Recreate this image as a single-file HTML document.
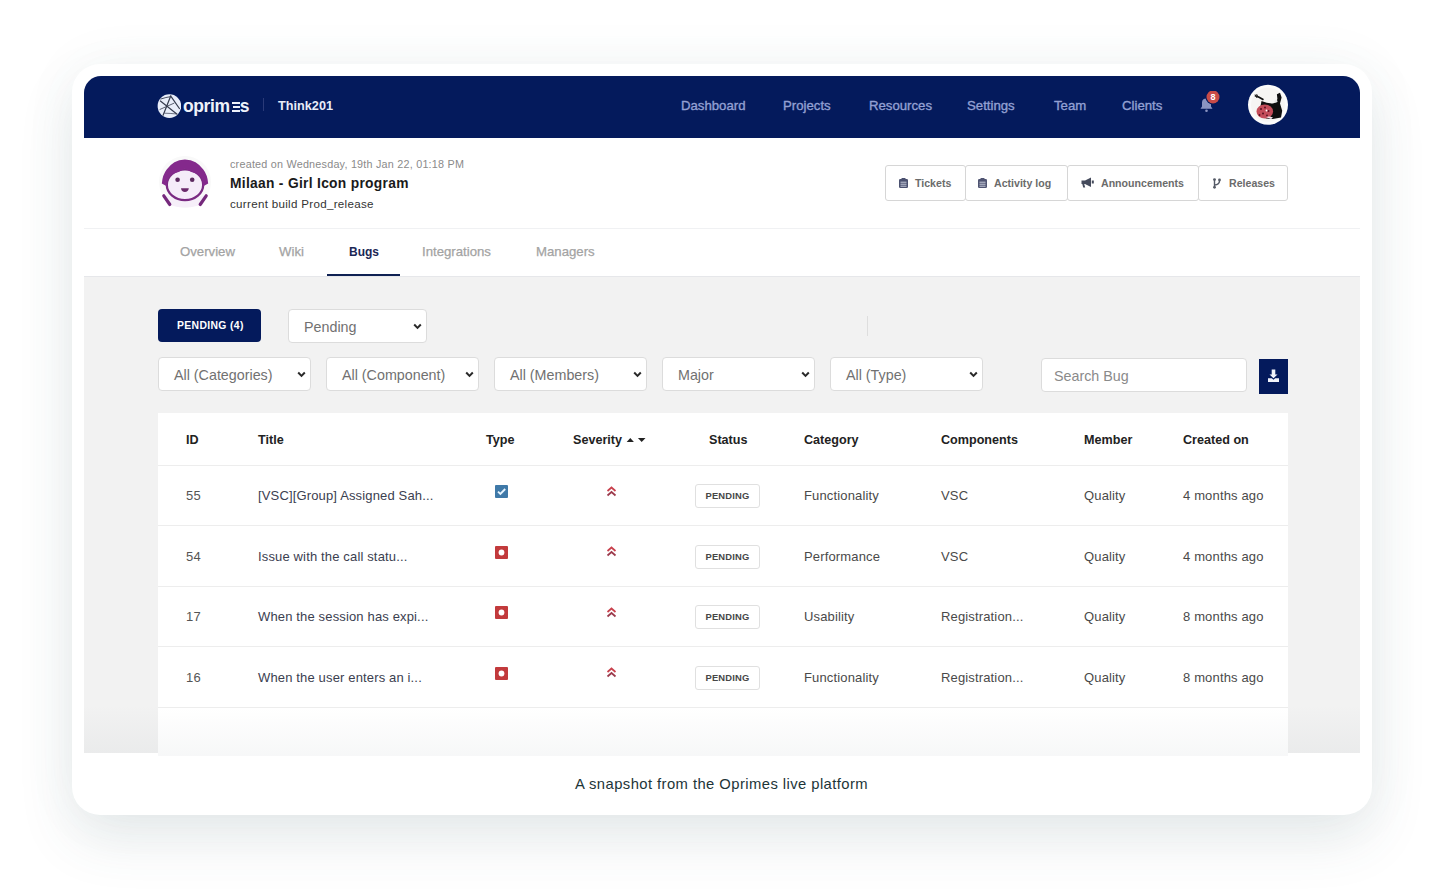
<!DOCTYPE html>
<html><head><meta charset="utf-8">
<style>
*{margin:0;padding:0;box-sizing:border-box}
html,body{width:1444px;height:895px;overflow:hidden;background:#fff;font-family:"Liberation Sans",sans-serif}
.abs{position:absolute}
#card{position:absolute;left:72px;top:64px;width:1300px;height:751px;background:#fff;border-radius:28px;
 box-shadow:0 24px 56px rgba(60,90,100,0.12),0 0 56px rgba(80,110,120,0.05)}
#nav{position:absolute;left:84px;top:76px;width:1276px;height:62px;background:#041a5c;border-radius:17px 17px 0 0}
.t{position:absolute;white-space:nowrap;line-height:1}
.navi{color:#93a0d3;font-size:13.2px;top:99px;-webkit-text-stroke:0.35px #93a0d3}
#hdr-line{position:absolute;left:84px;top:228px;width:1276px;height:1px;background:#f0f1f3}
#tab-line{position:absolute;left:84px;top:276px;width:1276px;height:1px;background:#e6e7ea}
#gray{position:absolute;left:84px;top:277px;width:1276px;height:476px;background:#f2f2f2}
.tab{color:#a3a3a3;font-size:13.2px;top:245.3px;-webkit-text-stroke:0.25px #a3a3a3}
.sel{position:absolute;height:34px;background:#fff;border:1px solid #dcdcdc;border-radius:4px}
.sel span{position:absolute;left:15px;top:10px;font-size:14.3px;color:#717171;white-space:nowrap;line-height:1}
.chev{position:absolute;right:4px;top:13px}
#table{position:absolute;left:158px;top:413px;width:1130px;height:343px;background:#fff}
.th{font-weight:bold;font-size:12.6px;color:#222;top:434px}
.td{font-size:13px;color:#4a4a4a;letter-spacing:0.15px}
.hl{position:absolute;left:158px;width:1130px;height:1px;background:#ededed}
.badge{position:absolute;left:695px;width:65px;height:24px;border:1px solid #e0e0e0;border-radius:3px;background:#fff;font-weight:bold;font-size:9.4px;color:#474747;text-align:center;line-height:22px;letter-spacing:0.2px}
.btn{position:absolute;top:165px;height:36px;border:1px solid #d6d6d6;background:#fff;border-radius:3px}
.btn span{position:absolute;top:12px;font-weight:bold;font-size:10.6px;color:#6b6b6b;white-space:nowrap;line-height:1}
</style></head>
<body>
<div id="card"></div>
<div id="nav"></div>
<!-- logo -->
<svg class="abs" style="left:157px;top:94px" width="24" height="24" viewBox="0 0 24 24">
 <circle cx="12.4" cy="12.1" r="11.8" fill="#e9eefa"/>
 <g stroke="#353b4d" stroke-width="1.2" fill="none" stroke-linecap="round">
  <path d="M13.8 1.7 L6.1 21.2"/><path d="M14.3 2.8 L22.4 14.5"/><path d="M3.4 7 L20.1 20.2"/>
  <path d="M3.8 5 Q9 3.2 13.8 2.6" stroke-width="0.9"/><path d="M3 15.4 L17 9.2" stroke-width="0.8"/><path d="M7.8 19.2 Q13 19.3 18.8 19.9" stroke-width="0.7"/>
 </g>
</svg>
<div class="t" style="left:183px;top:98px;font-size:17.5px;font-weight:bold;color:#eef2fa;letter-spacing:-0.4px">oprim<span style="display:inline-block;width:10px"></span>s</div>
<div class="abs" style="left:232px;top:101.5px;width:8px;height:2px;background:#eef2fa"></div>
<div class="abs" style="left:233px;top:105.5px;width:7px;height:2px;background:#eef2fa"></div>
<div class="abs" style="left:232px;top:109.5px;width:8px;height:2px;background:#eef2fa"></div>
<div class="abs" style="left:263px;top:98px;width:1px;height:13px;background:#2a3a78"></div>
<div class="t" style="left:278px;top:100px;font-size:12.7px;font-weight:bold;color:#e8ecf8">Think201</div>

<div class="t navi" style="left:681px">Dashboard</div>
<div class="t navi" style="left:783px">Projects</div>
<div class="t navi" style="left:869px">Resources</div>
<div class="t navi" style="left:967px">Settings</div>
<div class="t navi" style="left:1054px">Team</div>
<div class="t navi" style="left:1122px">Clients</div>
<!-- bell -->
<svg class="abs" style="left:1198px;top:91px" width="26" height="22" viewBox="0 0 26 22">
 <path d="M2.5 17.8 L14.5 17.8 L13 15.5 L13 11.5 Q13 7.5 8.5 7.5 Q4 7.5 4 11.5 L4 15.5 Z" fill="#8a94c2"/>
 <circle cx="8.5" cy="19.8" r="1.3" fill="#8a94c2"/>
 <circle cx="15" cy="6" r="7.5" fill="#041a5c"/>
 <circle cx="15" cy="6" r="6.5" fill="#c84b48"/>
 <text x="15" y="9.3" font-family="Liberation Sans" font-weight="bold" font-size="9" fill="#fff" text-anchor="middle">8</text>
</svg>
<!-- user avatar -->
<svg class="abs" style="left:1247px;top:84px" width="42" height="42" viewBox="0 0 42 42">
 <circle cx="21" cy="20.8" r="20" fill="#fbfbfb"/>
 <circle cx="21" cy="20.8" r="17" fill="#f6f5f3"/>
 <path d="M7.8 11.5 Q12 13 16.5 15.8" stroke="#111" stroke-width="1.8" fill="none"/>
 <path d="M8 10.5 L10 14 M9.5 10 L11.5 13.5" stroke="#222" stroke-width="0.9"/>
 <path d="M14.5 17 Q20 19.5 25.8 19.6 L28.9 18.6 L30.4 15 L29.9 10.3 L33 8.8 L34.6 13.4 L33 19.6 L35.2 26.8 L34 33.5 L25.8 35 L19.1 34.5 L12 30 Z" fill="#0f0f0f"/>
 <ellipse cx="17.8" cy="27.5" rx="8.3" ry="7" fill="#c44d5a"/>
 <g fill="#5a1020"><circle cx="14" cy="25" r="1"/><circle cx="18" cy="23.5" r="1"/><circle cx="21.5" cy="27" r="1"/><circle cx="16" cy="29.5" r="1"/><circle cx="12.5" cy="31" r="0.9"/><circle cx="20" cy="31.5" r="0.9"/></g>
 <circle cx="19.5" cy="26.5" r="0.9" fill="#fff"/>
 <circle cx="29" cy="17.2" r="1.4" fill="#e8e8e8"/>
 <path d="M19 33 Q23 32 26 33.5 L24 35 Z" fill="#f4e4ea"/>
</svg>

<!-- header -->
<svg class="abs" style="left:158px;top:155px" width="54" height="54" viewBox="0 0 54 54">
 <circle cx="27" cy="27" r="26" fill="#f9f9f9"/>
 <path d="M9 49.5 Q27 55 45 49.5 L48 40 Q27 47 6 40Z" fill="#f6eff9"/>
 <path d="M5.8 40.8 L11.8 49.5 M48.2 40.8 L42.2 49.5" stroke="#75297c" stroke-width="3.2" stroke-linecap="round"/>
 <ellipse cx="27" cy="29.8" rx="18.2" ry="15.4" fill="#f5ecf9" stroke="#7a2a82" stroke-width="2.3"/>
 <path d="M3.8 28.5 Q4.5 20 8.7 14.6 Q15 5 26.9 4.4 Q39 5 45.3 14.6 Q49.5 20 50.2 28.5 L44.8 31.5 Q45.2 26 43.4 23.3 Q41.5 20 39.2 18.8 Q33 17.5 26.9 13.8 Q21 17.5 14.6 18.8 Q12.3 20 10.4 23.3 Q8.8 26 9.2 31.5 Z" fill="#84298c"/>
 <circle cx="19.6" cy="24.8" r="2.3" fill="#5d2a60"/>
 <circle cx="34.2" cy="24.8" r="2.3" fill="#5d2a60"/>
 <path d="M23 33.2 L30.8 33.2 Q30.2 37 26.9 37 Q23.6 37 23 33.2Z" fill="#6b2a6b"/>
</svg>
<div class="t" style="left:230px;top:159px;font-size:10.8px;letter-spacing:0.22px;color:#8a8a8a">created on Wednesday, 19th Jan 22, 01:18 PM</div>
<div class="t" style="left:230px;top:177px;font-size:13.8px;letter-spacing:0.3px;font-weight:bold;color:#1a1a1a">Milaan - Girl Icon program</div>
<div class="t" style="left:230px;top:197.5px;font-size:11.6px;letter-spacing:0.3px;color:#333">current build Prod_release</div>

<div class="btn" style="left:885px;width:81px"><span style="left:29px">Tickets</span></div>
<div class="btn" style="left:965px;width:103px"><span style="left:28px">Activity log</span></div>
<div class="btn" style="left:1067px;width:132px"><span style="left:33px">Announcements</span></div>
<div class="btn" style="left:1198px;width:90px"><span style="left:30px">Releases</span></div>

<svg class="abs" style="left:899px;top:178px" width="9" height="10" viewBox="0 0 9 10"><rect x="0" y="1" width="9" height="9" rx="1.3" fill="#4b5170"/><rect x="2.5" y="0" width="4" height="2" rx="0.5" fill="#4b5170"/><path d="M1.5 4.2H7.5M1.5 6.2H7.5M1.5 8.2H7.5" stroke="#e9ecf6" stroke-width="0.8"/></svg>
<svg class="abs" style="left:978px;top:178px" width="9" height="10" viewBox="0 0 9 10"><rect x="0" y="1" width="9" height="9" rx="1.3" fill="#4f5472"/><rect x="2.5" y="0" width="4" height="2" rx="0.5" fill="#4f5472"/><path d="M1.5 4.2H7.5M1.5 6.2H7.5M1.5 8.2H7.5" stroke="#e9ecf6" stroke-width="0.8"/></svg>
<svg class="abs" style="left:1081px;top:177px" width="13" height="11" viewBox="0 0 13 11"><path d="M0.5 3.5 H4 L10 0.5 V10 L4 7 H3.2 L4.2 10.5 H2.2 L1.3 7 H0.5Z" fill="#454b5c"/><rect x="10.8" y="3.5" width="2" height="3" fill="#454b5c"/></svg>
<svg class="abs" style="left:1212px;top:178px" width="10" height="11" viewBox="0 0 10 11"><g stroke="#555a66" stroke-width="1.4" fill="none"><path d="M2.5 1.5V9.5"/><path d="M7.5 3 Q7.5 6.5 2.5 7"/></g><circle cx="2.5" cy="1.6" r="1.4" fill="#555a66"/><circle cx="2.5" cy="9.3" r="1.4" fill="#555a66"/><circle cx="7.5" cy="2" r="1.4" fill="#555a66"/></svg>
<div id="hdr-line"></div>
<div class="t tab" style="left:180px">Overview</div>
<div class="t tab" style="left:279px">Wiki</div>
<div class="t tab" style="left:349px;top:245.8px;-webkit-text-stroke:0;font-weight:bold;color:#1b2755;font-size:12px">Bugs</div>
<div class="t tab" style="left:422px">Integrations</div>
<div class="t tab" style="left:536px">Managers</div>
<div class="abs" style="left:327px;top:274px;width:73px;height:3px;background:#0f2153"></div>
<div id="tab-line"></div>
<div id="gray"></div>

<!-- filters -->
<div class="abs" style="left:158px;top:309px;width:103px;height:33px;background:#041a5c;border-radius:4px"></div>
<div class="t" style="left:177px;top:321px;font-size:10.4px;letter-spacing:0.35px;font-weight:bold;color:#fff">PENDING (4)</div>
<div class="sel" style="left:288px;top:309px;width:139px"><span>Pending</span><svg class="chev" width="9" height="7" viewBox="0 0 9 7"><path d="M1.2 1.5 L4.5 4.9 L7.8 1.5" stroke="#2a2a2a" stroke-width="2" fill="none"/></svg></div>
<div class="abs" style="left:867px;top:316px;width:1px;height:20px;background:#dedede"></div>

<div class="sel" style="left:158px;top:357px;width:153px"><span>All (Categories)</span><svg class="chev" width="9" height="7" viewBox="0 0 9 7"><path d="M1.2 1.5 L4.5 4.9 L7.8 1.5" stroke="#2a2a2a" stroke-width="2" fill="none"/></svg></div>
<div class="sel" style="left:326px;top:357px;width:153px"><span>All (Component)</span><svg class="chev" width="9" height="7" viewBox="0 0 9 7"><path d="M1.2 1.5 L4.5 4.9 L7.8 1.5" stroke="#2a2a2a" stroke-width="2" fill="none"/></svg></div>
<div class="sel" style="left:494px;top:357px;width:153px"><span>All (Members)</span><svg class="chev" width="9" height="7" viewBox="0 0 9 7"><path d="M1.2 1.5 L4.5 4.9 L7.8 1.5" stroke="#2a2a2a" stroke-width="2" fill="none"/></svg></div>
<div class="sel" style="left:662px;top:357px;width:153px"><span>Major</span><svg class="chev" width="9" height="7" viewBox="0 0 9 7"><path d="M1.2 1.5 L4.5 4.9 L7.8 1.5" stroke="#2a2a2a" stroke-width="2" fill="none"/></svg></div>
<div class="sel" style="left:830px;top:357px;width:153px"><span>All (Type)</span><svg class="chev" width="9" height="7" viewBox="0 0 9 7"><path d="M1.2 1.5 L4.5 4.9 L7.8 1.5" stroke="#2a2a2a" stroke-width="2" fill="none"/></svg></div>
<div class="sel" style="left:1041px;top:358px;width:206px"><span style="left:12px;color:#8a8a8a">Search Bug</span></div>
<div class="abs" style="left:1259px;top:359px;width:29px;height:35px;background:#041a5c"></div>
<svg class="abs" style="left:1267px;top:369px" width="13" height="14" viewBox="0 0 13 14"><path d="M4.7 0.5H8.3V5.5H10.5L6.5 9.2L2.5 5.5H4.7Z" fill="#f2f4fb"/><path d="M1 9.2H4.8L6.5 10.8L8.2 9.2H12V13H1Z" fill="#f2f4fb"/></svg>

<!-- table -->
<div id="table"></div>
<div class="t th" style="left:186px">ID</div>
<div class="t th" style="left:258px">Title</div>
<div class="t th" style="left:486px">Type</div>
<div class="t th" style="left:573px">Severity</div>
<div class="t th" style="left:709px">Status</div>
<div class="t th" style="left:804px">Category</div>
<div class="t th" style="left:941px">Components</div>
<div class="t th" style="left:1084px">Member</div>
<div class="t th" style="left:1183px">Created on</div>
<svg class="abs" style="left:626px;top:437px" width="20" height="6" viewBox="0 0 20 6"><path d="M0.7 5L4.3 1L7.9 5Z" fill="#222"/><path d="M11.9 1H19.5L15.7 5Z" fill="#222"/></svg>
<div class="hl" style="top:465px"></div>
<div class="hl" style="top:525px"></div>
<div class="hl" style="top:586px"></div>
<div class="hl" style="top:646px"></div>
<div class="hl" style="top:707px"></div>

<div class="t td" style="left:186px;top:489.0px;color:#555">55</div>
<div class="t td" style="left:258px;top:489.0px;color:#3b4050">[VSC][Group] Assigned Sah...</div>
<svg class="abs" style="left:495px;top:485.0px" width="13" height="13" viewBox="0 0 13 13"><rect width="13" height="13" rx="1" fill="#3f79a8"/><path d="M3 6.6 L5.4 9 L10.2 4" stroke="#e6f4ff" stroke-width="1.9" fill="none"/></svg>
<svg class="abs" style="left:606px;top:485.5px" width="11" height="11" viewBox="0 0 11 11"><path d="M1.5 5 L5.5 1.5 L9.5 5" stroke="#c8404c" stroke-width="1.7" fill="none"/><path d="M1.5 9.5 L5.5 6 L9.5 9.5" stroke="#9b3a4c" stroke-width="1.7" fill="none"/></svg>
<div class="badge" style="top:484.0px">PENDING</div>
<div class="t td" style="left:804px;top:489.0px">Functionality</div>
<div class="t td" style="left:941px;top:489.0px">VSC</div>
<div class="t td" style="left:1084px;top:489.0px">Quality</div>
<div class="t td" style="left:1183px;top:489.0px">4 months ago</div>
<div class="t td" style="left:186px;top:549.5px;color:#555">54</div>
<div class="t td" style="left:258px;top:549.5px;color:#3b4050">Issue with the call statu...</div>
<svg class="abs" style="left:495px;top:545.5px" width="13" height="13" viewBox="0 0 13 13"><rect width="13" height="13" rx="1" fill="#c23a3c"/><circle cx="6.5" cy="6.5" r="2.9" fill="#fff"/></svg>
<svg class="abs" style="left:606px;top:546.0px" width="11" height="11" viewBox="0 0 11 11"><path d="M1.5 5 L5.5 1.5 L9.5 5" stroke="#c8404c" stroke-width="1.7" fill="none"/><path d="M1.5 9.5 L5.5 6 L9.5 9.5" stroke="#9b3a4c" stroke-width="1.7" fill="none"/></svg>
<div class="badge" style="top:544.5px">PENDING</div>
<div class="t td" style="left:804px;top:549.5px">Performance</div>
<div class="t td" style="left:941px;top:549.5px">VSC</div>
<div class="t td" style="left:1084px;top:549.5px">Quality</div>
<div class="t td" style="left:1183px;top:549.5px">4 months ago</div>
<div class="t td" style="left:186px;top:610.0px;color:#555">17</div>
<div class="t td" style="left:258px;top:610.0px;color:#3b4050">When the session has expi...</div>
<svg class="abs" style="left:495px;top:606.0px" width="13" height="13" viewBox="0 0 13 13"><rect width="13" height="13" rx="1" fill="#c23a3c"/><circle cx="6.5" cy="6.5" r="2.9" fill="#fff"/></svg>
<svg class="abs" style="left:606px;top:606.5px" width="11" height="11" viewBox="0 0 11 11"><path d="M1.5 5 L5.5 1.5 L9.5 5" stroke="#c8404c" stroke-width="1.7" fill="none"/><path d="M1.5 9.5 L5.5 6 L9.5 9.5" stroke="#9b3a4c" stroke-width="1.7" fill="none"/></svg>
<div class="badge" style="top:605.0px">PENDING</div>
<div class="t td" style="left:804px;top:610.0px">Usability</div>
<div class="t td" style="left:941px;top:610.0px">Registration...</div>
<div class="t td" style="left:1084px;top:610.0px">Quality</div>
<div class="t td" style="left:1183px;top:610.0px">8 months ago</div>
<div class="t td" style="left:186px;top:670.5px;color:#555">16</div>
<div class="t td" style="left:258px;top:670.5px;color:#3b4050">When the user enters an i...</div>
<svg class="abs" style="left:495px;top:666.5px" width="13" height="13" viewBox="0 0 13 13"><rect width="13" height="13" rx="1" fill="#c23a3c"/><circle cx="6.5" cy="6.5" r="2.9" fill="#fff"/></svg>
<svg class="abs" style="left:606px;top:667.0px" width="11" height="11" viewBox="0 0 11 11"><path d="M1.5 5 L5.5 1.5 L9.5 5" stroke="#c8404c" stroke-width="1.7" fill="none"/><path d="M1.5 9.5 L5.5 6 L9.5 9.5" stroke="#9b3a4c" stroke-width="1.7" fill="none"/></svg>
<div class="badge" style="top:665.5px">PENDING</div>
<div class="t td" style="left:804px;top:670.5px">Functionality</div>
<div class="t td" style="left:941px;top:670.5px">Registration...</div>
<div class="t td" style="left:1084px;top:670.5px">Quality</div>
<div class="t td" style="left:1183px;top:670.5px">8 months ago</div>
<div class="abs" style="left:84px;top:705px;width:74px;height:48px;background:linear-gradient(rgba(60,80,90,0),rgba(60,80,90,0.045))"></div>
<div class="abs" style="left:158px;top:708px;width:1130px;height:48px;background:linear-gradient(rgba(60,80,90,0),rgba(60,80,90,0.045))"></div>
<div class="abs" style="left:1288px;top:705px;width:72px;height:48px;background:linear-gradient(rgba(60,80,90,0),rgba(60,80,90,0.045))"></div>
<!-- caption -->
<div class="t" style="left:575px;top:776.6px;font-size:14.8px;letter-spacing:0.43px;color:#1d3538">A snapshot from the Oprimes live platform</div>
</body></html>
